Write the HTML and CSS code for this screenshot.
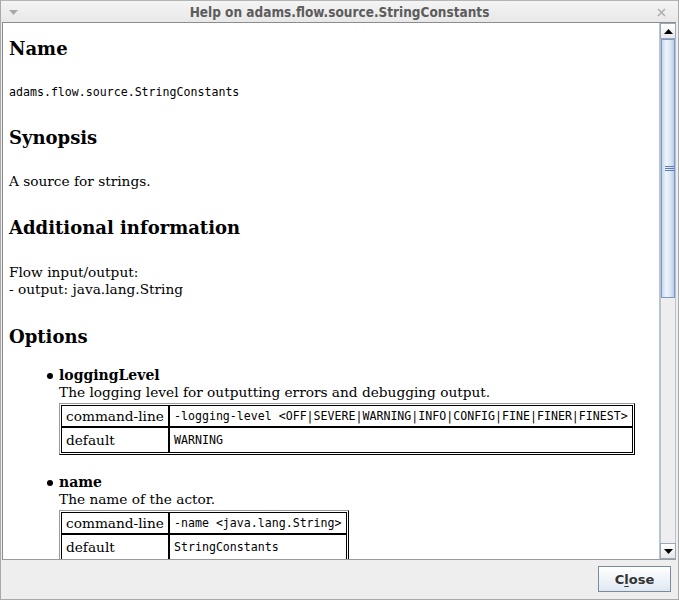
FILE: index.html
```html
<!DOCTYPE html>
<html>
<head>
<meta charset="utf-8">
<title>Help on adams.flow.source.StringConstants</title>
<link rel="stylesheet" href="styles.css">
</head>
<body>
<div class="window">
  <div class="titlebar">
    <svg class="menu-arrow" width="9" height="6" viewBox="0 0 9 6"><path d="M0 0 H9 L4.5 5 Z" fill="#a8a8a8"/></svg>
    <div class="title">Help on adams.flow.source.StringConstants</div>
    <svg class="close-x" width="9" height="9" viewBox="0 0 9 9"><path d="M1 1 L8 8 M8 1 L1 8" stroke="#b0b0b0" stroke-width="1.6"/></svg>
  </div>
  <div class="main">
    <div class="content">
      <h2 class="h-name">Name</h2>
      <p class="mono classname">adams.flow.source.StringConstants</p>
      <h2 class="h-syn">Synopsis</h2>
      <p class="text syn">A source for strings.</p>
      <h2 class="h-add">Additional information</h2>
      <p class="text flow">Flow input/output:<br>- output: java.lang.String</p>
      <h2 class="h-opt">Options</h2>
      <ul class="options">
        <li class="opt first">
          <div class="opt-name">loggingLevel</div>
          <div class="opt-desc">The logging level for outputting errors and debugging output.</div>
          <table class="opt-table">
            <tr class="r1"><td class="k">command-line</td><td class="v mono">-logging-level &lt;OFF|SEVERE|WARNING|INFO|CONFIG|FINE|FINER|FINEST&gt;</td></tr>
            <tr class="r2"><td class="k">default</td><td class="v mono">WARNING</td></tr>
          </table>
        </li>
        <li class="opt">
          <div class="opt-name">name</div>
          <div class="opt-desc">The name of the actor.</div>
          <table class="opt-table">
            <tr class="r1"><td class="k">command-line</td><td class="v mono">-name &lt;java.lang.String&gt;</td></tr>
            <tr class="r2"><td class="k">default</td><td class="v mono">StringConstants</td></tr>
          </table>
        </li>
      </ul>
    </div>
    <div class="scrollbar">
      <div class="sb-btn up"><svg width="9" height="5" viewBox="0 0 9 5"><path d="M0 5 H9 L4.5 0 Z" fill="#000"/></svg></div>
      <div class="sb-track">
        <div class="sb-thumb"><div class="grip"><i></i><i></i><i></i></div></div>
      </div>
      <div class="sb-btn down"><svg width="9" height="5" viewBox="0 0 9 5"><path d="M0 0 H9 L4.5 5 Z" fill="#000"/></svg></div>
    </div>
  </div>
  <div class="footer">
    <button class="btn-close">C<u>l</u>ose</button>
  </div>
</div>
</body>
</html>
```
FILE: styles.css
```css
html, body {
  margin: 0;
  padding: 0;
  background: #eeeeee;
}
.window {
  width: 679px;
  height: 600px;
  box-sizing: border-box;
  display: flex;
  flex-direction: column;
  background: #eeeeee;
  border-left: 1px solid #a9a9a9;
  border-right: 1px solid #a9a9a9;
  border-bottom: 1px solid #a9a9a9;
  overflow: hidden;
}
.titlebar {
  height: 22px;
  flex: none;
  display: flex;
  align-items: center;
  background: linear-gradient(#f4f4f4, #e8e8e8);
  border-top: 1px solid #b5b5b5;
  box-sizing: border-box;
  position: relative;
}
.menu-arrow {
  position: absolute;
  left: 8px;
  top: 9px;
}
.close-x {
  position: absolute;
  right: 12px;
  top: 7px;
}
.title {
  flex: 1;
  text-align: center;
  font-family: "DejaVu Sans Condensed", "DejaVu Sans", sans-serif;
  font-stretch: condensed;
  font-weight: bold;
  font-size: 13.5px;
  color: #5c5c5c;
  padding-top: 1px;
}
.main {
  flex: 1;
  display: flex;
  min-height: 0;
  margin-left: 1px;
  margin-right: 2px;
  border-top: 1px solid #8c8c8c;
  border-left: 1px solid #8c8c8c;
  border-bottom: 1px solid #9a9a9a;
}
.content {
  flex: 1;
  background: #ffffff;
  overflow: hidden;
  padding-left: 6px;
  font-family: "DejaVu Serif", serif;
  color: #000;
}
h2 {
  font-family: "DejaVu Serif", serif;
  font-weight: bold;
  font-size: 18px;
  line-height: 22px;
  margin: 0;
}
p { margin: 0; }
.mono {
  font-family: "DejaVu Sans Mono", monospace;
  font-size: 11.6px;
}
.text {
  font-size: 13.7px;
  line-height: 17px;
}
.h-name { margin-top: 15px; }
.classname { margin-top: 24px; line-height: 17px; }
.h-syn { margin-top: 26px; }
.syn { margin-top: 24px; }
.h-add { margin-top: 27px; }
.flow { margin-top: 25px; }
.h-opt { margin-top: 28px; }
.options {
  list-style: none;
  margin: 19px 0 0 0;
  padding: 0 0 0 50px;
}
.opt { position: relative; }
.opt + .opt { margin-top: 19px; }
.opt::before {
  content: "";
  position: absolute;
  left: -12px;
  top: 6px;
  width: 6px;
  height: 6px;
  border-radius: 50%;
  background: #000;
}
.opt-name {
  font-weight: bold;
  font-size: 14px;
  line-height: 17px;
}
.opt-desc {
  font-size: 13.7px;
  line-height: 17px;
}
.opt-table {
  margin-top: 2px;
  border-collapse: separate;
  border-spacing: 0;
  border: 1px solid #000;
  border-top-color: #9a9a9a;
  border-left-color: #9a9a9a;
  padding: 1px;
}
.opt-table td {
  border: 1px solid #000;
  padding: 0 4px;
  height: 22px;
  box-sizing: border-box;
  white-space: nowrap;
}
.opt-table td.k {
  font-family: "DejaVu Serif", serif;
  font-size: 13.7px;
  width: 108px;
  padding-left: 4px;
}
.opt-table .r2 td { height: 26px; }
.opt-table td.v { font-size: 11.6px; }
.scrollbar {
  width: 17px;
  flex: none;
  display: flex;
  flex-direction: column;
  background: #eeeeee;
  border-left: 1px solid #b8c4d0;
  box-sizing: border-box;
}
.sb-btn {
  height: 16px;
  flex: none;
  display: flex;
  align-items: center;
  justify-content: center;
  background: linear-gradient(#ffffff, #e8e8e8);
  border: 1px solid #9aa8b8;
  box-sizing: border-box;
}
.sb-track {
  flex: 1;
  background: #eeeeee;
  border-left: 1px solid #b8c4d0;
  border-right: 1px solid #b8c4d0;
}
.sb-thumb {
  height: 259px;
  box-sizing: border-box;
  border: 1px solid #7a99c8;
  background: linear-gradient(90deg, #c6d6ec 0%, #eef4fb 35%, #dbe6f4 70%, #bccde6 100%);
  position: relative;
}
.grip {
  position: absolute;
  left: 3px;
  top: 126px;
  width: 9px;
  display: flex;
  flex-direction: column;
  gap: 1px;
}
.grip i {
  display: block;
  height: 1px;
  background: #5a7dc0;
}
.footer {
  height: 39px;
  flex: none;
  display: flex;
  justify-content: flex-end;
  align-items: flex-start;
  padding: 6px 7px 0 0;
  box-sizing: border-box;
}
.btn-close {
  width: 73px;
  height: 26px;
  border: 1px solid #7a8a9a;
  border-radius: 0;
  background: linear-gradient(#ffffff, #dfe8f2);
  font-family: "DejaVu Sans", sans-serif;
  font-weight: bold;
  font-size: 13px;
  color: #333333;
  padding: 0;
}
.btn-close u { text-decoration: underline; text-underline-offset: 2px; }
```
